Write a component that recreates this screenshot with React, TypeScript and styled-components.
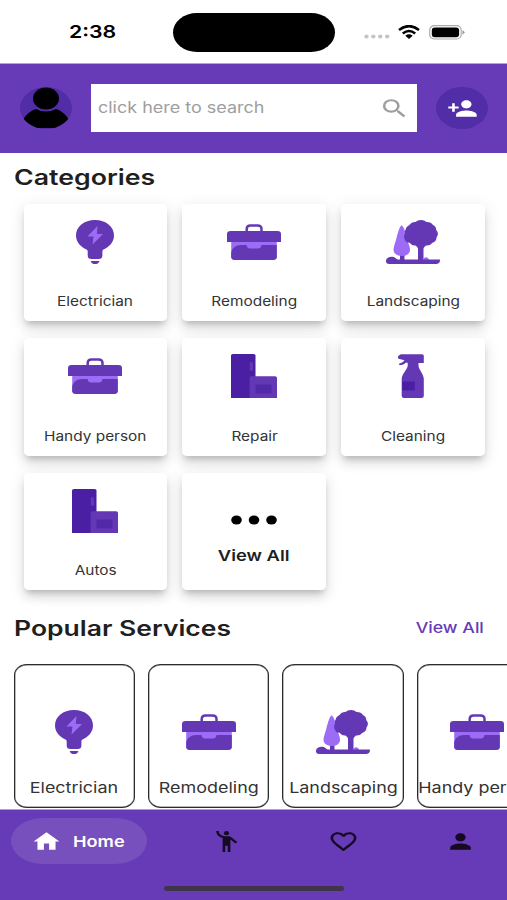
import React from "react";
import styled, { createGlobalStyle } from "styled-components";
import {
  MdSearch,
  MdPersonAdd,
  MdHome,
  MdEmojiPeople,
  MdFavoriteBorder,
  MdPerson,
} from "react-icons/md";

const PURPLE = "#673ab7";
const DEEP = "#512da8";
const ICON = "#6438b5";
const LIGHT = "#9c6cf6";
const DARK = "#4a1fa3";

const GlobalStyle = createGlobalStyle`
  *, *::before, *::after { box-sizing: border-box; }
  body { margin: 0; background: #fff; font-family: Inter, Roboto, sans-serif; }
`;

const Screen = styled.div`
  width: 507px;
  height: 900px;
  display: flex;
  flex-direction: column;
  overflow: hidden;
  background: #fff;
`;

/* Wide lettering shared by every caption in the app. */
const Text = styled.span<{
  $size: number;
  $stretch?: number;
  $weight?: number;
  $color?: string;
  $from?: string;
}>`
  display: block;
  white-space: nowrap;
  line-height: 20px;
  font-size: ${(p) => p.$size}px;
  font-weight: ${(p) => p.$weight ?? 400};
  color: ${(p) => p.$color ?? "#1f1f1f"};
  transform: scaleX(${(p) => p.$stretch ?? 1.2});
  transform-origin: ${(p) => p.$from ?? "center"};
`;

const StatusBar = styled.div`
  flex: none;
  height: 63px;
  display: grid;
  grid-template-columns: 173px 162px 1fr;
  align-items: start;
`;
const Clock = styled.div`
  padding: 22px 0 0 69px;
`;
const Island = styled.div`
  height: 39px;
  margin-top: 13px;
  background: #000;
  border-radius: 24px / 19.5px;
`;
const Signals = styled.div`
  display: flex;
  align-items: center;
  height: 22px;
  margin: 21px 0 0 29px;
`;
const Dots = styled.svg`
  margin-top: 9px;
`;
const Wifi = styled.svg`
  margin-left: 8px;
`;
const Battery = styled.svg`
  margin-left: 9px;
`;

const Header = styled.header`
  flex: none;
  height: 90px;
  border-top: 1px solid #b7a1dc;
  background: ${PURPLE};
  display: flex;
  align-items: center;
  padding: 0 19px 1px 20px;
`;
const SearchBox = styled.div`
  width: 326px;
  height: 48px;
  margin: 0 19px;
  padding: 0 7px;
  background: #fff;
  display: flex;
  align-items: center;
  justify-content: space-between;
`;
const AddButton = styled.button`
  width: 52px;
  height: 42px;
  padding: 0;
  border: 0;
  border-radius: 50%;
  background: ${DEEP};
  display: flex;
  align-items: center;
  justify-content: center;
  color: #fff;
`;

const wide = { preserveAspectRatio: "none" };
const SearchIcon = styled(MdSearch).attrs(wide)`
  width: 31px;
  height: 25px;
  color: #9e9e9e;
`;
const AddIcon = styled(MdPersonAdd).attrs(wide)`
  width: 31px;
  height: 25px;
`;
const HomeIcon = styled(MdHome).attrs(wide)`
  width: 31px;
  height: 25px;
  color: #fff;
`;
const PeopleIcon = styled(MdEmojiPeople).attrs(wide)`
  width: 31px;
  height: 25px;
`;
const HeartIcon = styled(MdFavoriteBorder).attrs(wide)`
  width: 31px;
  height: 25px;
`;
const PersonIcon = styled(MdPerson).attrs(wide)`
  width: 31px;
  height: 25px;
`;

const Main = styled.main`
  flex: 1;
  min-height: 0;
  overflow: hidden;
`;
const SectionHead = styled.div`
  height: 46px;
  padding: 1px 23px 0 14px;
  display: flex;
  align-items: center;
  justify-content: space-between;
`;
const Grid = styled.div`
  display: grid;
  grid-template-columns: repeat(3, 143.5px);
  grid-auto-rows: 117.3px;
  gap: 17px 15.4px;
  padding: 5px 0 0 23.5px;
`;
const Card = styled.div<{ $menu?: boolean }>`
  display: flex;
  flex-direction: column;
  align-items: center;
  justify-content: space-between;
  padding: ${(p) => (p.$menu ? "42px 0 24px" : "16px 0 10px")};
  border-radius: 5px / 4px;
  background: #fff;
  box-shadow:
    0 5px 6px -3px rgba(0, 0, 0, 0.2),
    0 8px 11px 0 rgba(0, 0, 0, 0.09),
    0 3px 16px 2px rgba(0, 0, 0, 0.07);
`;
const PopularHead = styled(SectionHead)`
  height: 40px;
  margin-top: 18px;
`;
const Strip = styled.div`
  display: flex;
  gap: 13px;
  margin-top: 16px;
  padding-left: 13.5px;
`;
const Tile = styled.div`
  flex: none;
  width: 121.4px;
  height: 144px;
  padding: 45px 0 9px;
  border: 1px solid #2b2b2b;
  border-radius: 13px / 11px;
  box-shadow: inset 0 0 0 0.5px #777;
  display: flex;
  flex-direction: column;
  align-items: center;
  justify-content: space-between;
`;

const NavBar = styled.nav`
  flex: none;
  height: 91px;
  border-top: 1px solid #b0a0cb;
  background: ${PURPLE};
  display: flex;
  flex-direction: column;
  justify-content: space-between;
  padding: 8px 0 9px;
`;
const Tabs = styled.div`
  display: flex;
  align-items: center;
  gap: 64px;
  padding: 0 31px 0 11px;
  color: #150a22;
`;
const HomeTab = styled.div`
  flex: none;
  width: 136px;
  height: 46px;
  padding: 1px 0 0 20px;
  display: flex;
  align-items: center;
  gap: 11px;
  border-radius: 32px / 23px;
  background: #7850bd;
`;
const OtherTabs = styled.div`
  flex: 1;
  display: flex;
  justify-content: space-between;
`;
const Indicator = styled.div`
  width: 180px;
  height: 5px;
  margin-left: 164px;
  border-radius: 3px;
  background: #40344a;
`;

function Avatar() {
  return (
    <svg width="52" height="42" viewBox="0 0 52 42">
      <defs>
        <clipPath id="avatar">
          <ellipse cx="26" cy="21" rx="26" ry="21" />
        </clipPath>
      </defs>
      <ellipse cx="26" cy="21" rx="26" ry="21" fill={DEEP} />
      <g clipPath="url(#avatar)">
        <path d="M3 33C6 27.500 10 24 16 22Q26 27 36 22C42 24 46 27.500 49 33L42 41H10Z" />
        <ellipse cx="26" cy="11.500" rx="14.300" ry="12.400" fill={DEEP} />
        <ellipse cx="26" cy="11.500" rx="13" ry="11" />
      </g>
    </svg>
  );
}

function Bulb() {
  return (
    <svg width="54" height="44" viewBox="0 0 54 44">
      <path
        fill={ICON}
        d="M27 0C38 0 46 6.500 46 15.500C46 22.500 41 27 35.500 29.500Q34.400 30 34.400 31.500V35.500Q34.400 39 30.500 39H23.500Q19.700 39 19.700 35.500V31.500Q19.700 30 18.500 29.500C13 27 8 22.500 8 15.500C8 6.500 16 0 27 0Z"
      />
      <path fill={LIGHT} d="M29.500 6L19.500 16.500H25.500L24.500 24.500L35 14H28.800Z" />
      <path fill={ICON} d="M22.700 41H31.500Q30.500 44.200 27 44.200T22.700 41Z" />
    </svg>
  );
}

function Toolbox() {
  return (
    <svg width="54" height="44" viewBox="0 0 54 44">
      <path d="M19.700 12V9Q19.700 5.500 23.500 5.500H30.500Q34.500 5.500 34.500 9V12" fill="none" stroke={ICON} strokeWidth="2.500" />
      <path fill={LIGHT} d="M4.200 20H49.800V38H4.200Z" />
      <path
        fill={ICON}
        d="M4.200 33C4.600 28 9 25 14 25H19.500C20 27.500 21 28.500 23 28.500H31C33 28.500 34 27.500 34.500 25H49.800V37Q49.800 40 46.500 40H7.500Q4.200 40 4.200 37Z"
      />
      <path fill={ICON} d="M0 22V14Q0 11 3.500 11H50.500Q54 11 54 14V22Z" />
    </svg>
  );
}

function Trees() {
  return (
    <svg width="54" height="44" viewBox="0 0 54 44">
      <path
        fill={ICON}
        d="M35 0Q38.500 0 40.500 2Q45 1.800 47 5Q50.300 6.500 50.200 10Q53.500 13.500 50.500 17.500Q50.500 21.500 46.500 22.800Q44 26 40 25.500Q38 27 37.500 28.500V40H32V28.500Q31.500 27 29.500 25.500Q26 26 23.500 22.800Q19 21.500 19.500 17.500Q16.500 13.500 19.500 10Q20 6.500 23.500 5Q25.500 1.800 29.500 2Q31.500 0 35 0Z"
      />
      <path fill={ICON} d="M14 33H18.500V40H14Z" />
      <path fill={LIGHT} d="M15.600 5.300C18.500 7 20 15 22 22C24 28 25 30 23 33Q21 36 16 36T8.500 33C6.500 30 8 26 10 20C11.500 14 13.500 6.500 15.600 5.300Z" />
      <path fill={ICON} d="M18 16.500L20 10L28 20L21.500 22.800Q18.500 21 18 16.500Z" />
      <path fill={LIGHT} d="M37.500 40Q37.500 37 40.500 37.300Q43 37.800 43 40Z" />
      <path fill={ICON} d="M0 42C-.5 38 3 36.500 6.500 36.800C9.500 37 10 39.600 13 39.600H54C54 42.500 53 44 50.500 44H3Q.5 44 0 42Z" />
    </svg>
  );
}

function Appliances() {
  return (
    <svg width="54" height="44" viewBox="0 0 54 44">
      <path fill={DARK} d="M4 44V1.500Q4 0 6 0H26.500Q28.500 0 28.500 1.500V44Z" />
      <rect x="22.800" y="8" width="3.200" height="8.800" rx="1.500" fill={ICON} />
      <path fill={ICON} d="M22.600 44V24Q22.600 22.300 24.600 22.300H48Q50 22.300 50 24V44Z" />
      <rect x="28.500" y="30.500" width="16" height="9" rx="1" fill="#5229a8" />
    </svg>
  );
}

function Spray() {
  return (
    <svg width="54" height="44" viewBox="0 0 54 44">
      <path
        fill={ICON}
        d="M15 .2H36Q37.800 .2 37.800 1.700V9H32.500V12C33 16 37.800 20 37.800 25V42Q37.800 44 35.500 44H18Q15.700 44 15.700 42V25C15.700 20 21 16 21.700 12V8.700H19.500Q18 11 13.200 11L13 9.700L16.500 8.200L18.500 6.300L12.500 4.700Q10.500 2 15 .2Z"
      />
      <rect x="16.300" y="27.500" width="12.500" height="9" fill={DARK} />
    </svg>
  );
}

const categories = [
  { label: "Electrician", icon: <Bulb /> },
  { label: "Remodeling", icon: <Toolbox /> },
  { label: "Landscaping", icon: <Trees /> },
  { label: "Handy person", icon: <Toolbox /> },
  { label: "Repair", icon: <Appliances /> },
  { label: "Cleaning", icon: <Spray /> },
  { label: "Autos", icon: <Appliances /> },
];

export default function App() {
  return (
    <Screen>
      <GlobalStyle />
      <StatusBar>
        <Clock>
          <Text $size={17.6} $stretch={1.21} $weight={600} $color="#000" $from="left">2:38</Text>
        </Clock>
        <Island />
        <Signals>
          <Dots width="26" height="5" viewBox="0 0 26 5" fill="#c4c4c4">
            <ellipse cx="2.500" cy="2.500" rx="2.200" ry="2" />
            <ellipse cx="9.300" cy="2.500" rx="2.200" ry="2" />
            <ellipse cx="16.200" cy="2.500" rx="2.200" ry="2" />
            <ellipse cx="23.200" cy="2.500" rx="2.200" ry="2" />
          </Dots>
          <Wifi width="22" height="14" viewBox="0 0 22 14" fill="none" stroke="#000" strokeWidth="2.500">
            <path d="M1 5Q11 -2.800 21 5" />
            <path d="M4.800 8.500Q11 3.500 17.200 8.500" />
            <path d="M11 14L7.300 10.800Q11 7.900 14.700 10.800Z" fill="#000" stroke="none" />
          </Wifi>
          <Battery width="36" height="15" viewBox="0 0 36 15">
            <rect x=".7" y=".7" width="31.500" height="13.300" rx="4.500" fill="none" stroke="#aaa" strokeWidth="1.200" />
            <rect x="2.800" y="2.400" width="27.300" height="9.900" rx="3" />
            <path d="M33.500 5.200Q35.500 6 35.500 7.300T33.500 9.500Z" fill="#999" />
          </Battery>
        </Signals>
      </StatusBar>

      <Header>
        <Avatar />
        <SearchBox>
          <Text $size={15.2} $stretch={1.183} $color="#9e9e9e" $from="left">click here to search</Text>
          <SearchIcon />
        </SearchBox>
        <AddButton aria-label="Add person">
          <AddIcon />
        </AddButton>
      </Header>

      <Main>
        <SectionHead>
          <Text $size={21.2} $stretch={1.26} $weight={600} $from="left">Categories</Text>
        </SectionHead>
        <Grid>
          {categories.map((c) => (
            <Card key={c.label}>
              {c.icon}
              <Text $size={13} $stretch={1.185} $color="#333">{c.label}</Text>
            </Card>
          ))}
          <Card $menu>
            <svg width="46" height="10" viewBox="0 0 46 10">
              <ellipse cx="5.500" cy="5" rx="5.300" ry="4.500" />
              <ellipse cx="23" cy="5" rx="5.300" ry="4.500" />
              <ellipse cx="40.500" cy="5" rx="5.300" ry="4.500" />
            </svg>
            <Text $size={15.2} $stretch={1.21} $weight={600}>View All</Text>
          </Card>
        </Grid>
        <PopularHead>
          <Text $size={21.2} $stretch={1.25} $weight={600} $from="left">Popular Services</Text>
          <Text $size={14.8} $weight={500} $color={PURPLE} $from="right">View All</Text>
        </PopularHead>
        <Strip>
          {categories.slice(0, 4).map((c) => (
            <Tile key={c.label}>
              {c.icon}
              <Text $size={15} $stretch={1.195} $color="#333">{c.label}</Text>
            </Tile>
          ))}
        </Strip>
      </Main>

      <NavBar>
        <Tabs>
          <HomeTab>
            <HomeIcon />
            <Text $size={15.2} $stretch={1.195} $weight={600} $color="#fff" $from="left">Home</Text>
          </HomeTab>
          <OtherTabs>
            <PeopleIcon />
            <HeartIcon />
            <PersonIcon />
          </OtherTabs>
        </Tabs>
        <Indicator />
      </NavBar>
    </Screen>
  );
}
